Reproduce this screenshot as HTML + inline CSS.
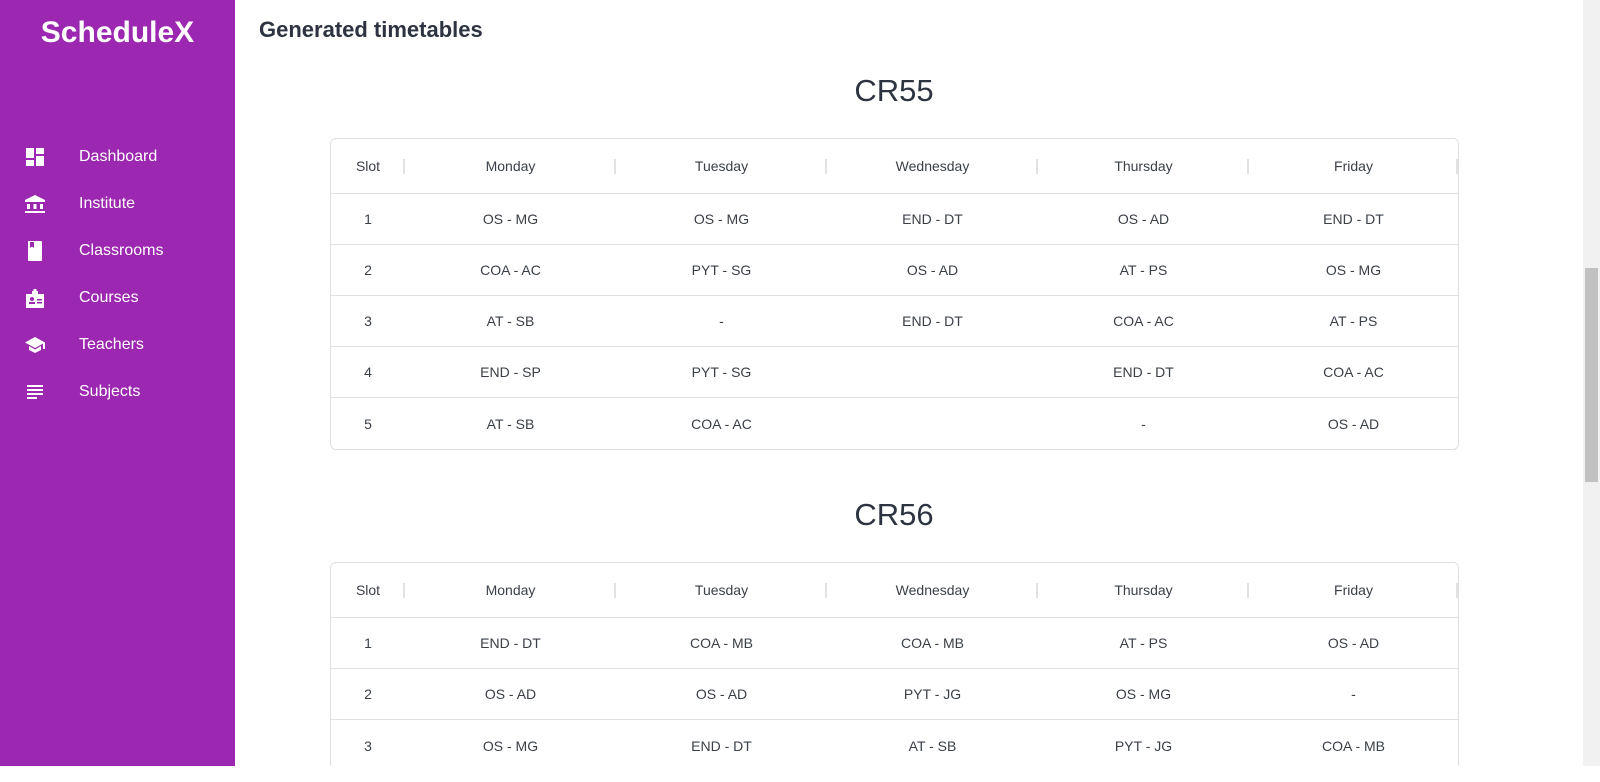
<!DOCTYPE html>
<html style="overflow:hidden"><head><meta charset="utf-8"><style>
*{margin:0;padding:0;box-sizing:border-box}
html,body{width:1600px;height:782px;overflow:hidden}
body{font-family:"Liberation Sans",sans-serif;background:#fff}
#wrap{position:relative;width:1600px;height:782px;overflow:hidden}
.side{position:absolute;left:0;top:0;width:235px;height:766px;background:#9c27b0;color:#fff}
.logo{position:absolute;top:16px;left:0;width:235px;text-align:center;font-size:30px;font-weight:bold}
.item{position:absolute;left:0;height:24px;width:235px;font-size:16px;line-height:24px}
.item span{position:absolute;left:79px}
.item svg{position:absolute;left:24px;top:2px}
h1{position:absolute;left:259px;top:17px;font-size:22px;font-weight:bold;color:#2d3340}
.cr{position:absolute;left:330px;width:1128px;text-align:center;font-size:31px;color:#2d3340}
table{position:absolute;left:330px;width:1129px;border:1px solid #e0e0e0;border-radius:6px;border-collapse:separate;border-spacing:0;font-size:14px;color:#3a3f47;table-layout:fixed}
th{height:55px;font-weight:normal;position:relative;border-bottom:1px solid #e0e0e0}
th:after{content:"";position:absolute;right:0;top:20px;height:15px;width:2px;background:#e2e2e2}
td{height:51px;text-align:center;border-bottom:1px solid #e0e0e0}
tr:last-child td{border-bottom:none}
.sb{position:absolute;left:1583px;top:0;width:17px;height:766px;background:#f1f1f1}
.th{position:absolute;left:1585px;top:268px;width:13px;height:214px;background:#c1c1c1}
.bot{position:absolute;left:0;top:766px;width:1600px;height:16px;background:#fff}
</style></head><body><div id="wrap">
<div class="side">
<div class="logo">ScheduleX</div>
<div class="item" style="top:145px"><svg width="22" height="20" viewBox="0 0 22 20"><rect x="2" y="1" width="8" height="10" fill="#fff"/><rect x="12" y="1" width="8" height="6" fill="#fff"/><rect x="2" y="13" width="8" height="6" fill="#fff"/><rect x="12" y="9" width="8" height="10" fill="#fff"/></svg><span>Dashboard</span></div>
<div class="item" style="top:192px"><svg width="22" height="20" viewBox="0 0 22 20"><path d="M1 6L11 1L21 6V8H1Z" fill="#fff"/><rect x="3" y="10" width="3" height="5" fill="#fff"/><rect x="9.5" y="10" width="3" height="5" fill="#fff"/><rect x="16" y="10" width="3" height="5" fill="#fff"/><rect x="1" y="17" width="20" height="2" fill="#fff"/></svg><span>Institute</span></div>
<div class="item" style="top:239px"><svg width="22" height="20" viewBox="0 0 22 20"><path d="M4 0H17Q18 0 18 1V19Q18 20 17 20H5Q4 20 4 19Z" fill="#fff"/><path d="M6 1V7L8 5.5L10 7V1Z" fill="#9c27b0"/></svg><span>Classrooms</span></div>
<div class="item" style="top:286px"><svg width="22" height="20" viewBox="0 0 22 20"><path d="M2 6H8V3H14V6H20V20H2Z" fill="#fff"/><rect x="9.5" y="1" width="3" height="5" fill="#fff"/><circle cx="8" cy="11" r="2" fill="#9c27b0"/><rect x="5" y="14" width="6" height="2" fill="#9c27b0"/><rect x="13" y="11" width="5" height="1.5" fill="#9c27b0"/><rect x="13" y="14" width="5" height="1.5" fill="#9c27b0"/></svg><span>Courses</span></div>
<div class="item" style="top:333px"><svg width="22" height="20" viewBox="0 0 22 20"><path d="M11 2L1 7.5L11 13L19 8.6V14H21V7.5Z" fill="#fff"/><path d="M5 11V15L11 18L17 15V11L11 14.5Z" fill="#fff"/></svg><span>Teachers</span></div>
<div class="item" style="top:380px"><svg width="22" height="20" viewBox="0 0 22 20"><rect x="3" y="3" width="16" height="2" fill="#fff"/><rect x="3" y="7" width="16" height="2" fill="#fff"/><rect x="3" y="11" width="16" height="2" fill="#fff"/><rect x="3" y="15" width="10" height="2" fill="#fff"/></svg><span>Subjects</span></div>
</div>
<h1>Generated timetables</h1>
<div class="cr" style="top:73px">CR55</div>
<table style="top:138px">
<colgroup><col style="width:74px"><col style="width:211px"><col style="width:211px"><col style="width:211px"><col style="width:211px"><col style="width:209px"></colgroup>
<tr><th>Slot</th><th>Monday</th><th>Tuesday</th><th>Wednesday</th><th>Thursday</th><th>Friday</th></tr>
<tr><td>1</td><td>OS - MG</td><td>OS - MG</td><td>END - DT</td><td>OS - AD</td><td>END - DT</td></tr>
<tr><td>2</td><td>COA - AC</td><td>PYT - SG</td><td>OS - AD</td><td>AT - PS</td><td>OS - MG</td></tr>
<tr><td>3</td><td>AT - SB</td><td>-</td><td>END - DT</td><td>COA - AC</td><td>AT - PS</td></tr>
<tr><td>4</td><td>END - SP</td><td>PYT - SG</td><td></td><td>END - DT</td><td>COA - AC</td></tr>
<tr><td>5</td><td>AT - SB</td><td>COA - AC</td><td></td><td>-</td><td>OS - AD</td></tr>
</table>
<div class="cr" style="top:497px">CR56</div>
<table style="top:562px">
<colgroup><col style="width:74px"><col style="width:211px"><col style="width:211px"><col style="width:211px"><col style="width:211px"><col style="width:209px"></colgroup>
<tr><th>Slot</th><th>Monday</th><th>Tuesday</th><th>Wednesday</th><th>Thursday</th><th>Friday</th></tr>
<tr><td>1</td><td>END - DT</td><td>COA - MB</td><td>COA - MB</td><td>AT - PS</td><td>OS - AD</td></tr>
<tr><td>2</td><td>OS - AD</td><td>OS - AD</td><td>PYT - JG</td><td>OS - MG</td><td>-</td></tr>
<tr><td>3</td><td>OS - MG</td><td>END - DT</td><td>AT - SB</td><td>PYT - JG</td><td>COA - MB</td></tr>
</table>
<div class="sb"></div><div class="th"></div>
<div class="bot"></div>
</div></body></html>
